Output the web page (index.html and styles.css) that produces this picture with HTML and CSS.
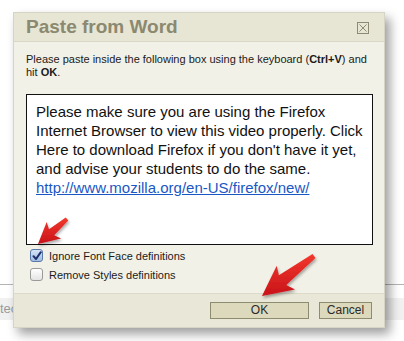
FILE: index.html
```html
<!DOCTYPE html>
<html>
<head>
<meta charset="utf-8">
<link rel="stylesheet" href="styles.css">
</head>
<body>
<div class="page">
  <div class="rule"></div>
  <div class="band"><span class="band-text">tec</span></div>
</div>

<div class="dialog">
  <div class="titlebar">
    <span class="title">Paste from Word</span>
    <span class="close">
      <svg width="12" height="12" viewBox="0 0 12 12"><rect x="0.5" y="0.5" width="11" height="11" fill="none" stroke="#8c8a74"/><path d="M2.5 2.5 L9.5 9.5 M9.5 2.5 L2.5 9.5" stroke="#8c8a74" stroke-width="1"/></svg>
    </span>
  </div>
  <div class="content">
    <p class="intro">Please paste inside the following box using the keyboard (<b>Ctrl+V</b>) and<br>hit <b>OK</b>.</p>
    <div class="paste">
      <p>Please make sure you are using the Firefox Internet Browser to view this video properly. Click Here to download Firefox if you don't have it yet, and advise your students to do the same. <a href="#">http://www.mozilla.org/en-US/firefox/new/</a></p>
    </div>
    <div class="options">
      <label class="opt"><span class="cb checked"><svg width="10" height="10" viewBox="0 0 10 10"><path d="M1.5 5.2 L4 8 L8.8 1.2" fill="none" stroke="#1d2f6b" stroke-width="2" stroke-linecap="round" stroke-linejoin="round"/></svg></span>Ignore Font Face definitions</label>
      <label class="opt"><span class="cb"></span>Remove Styles definitions</label>
    </div>
  </div>
  <div class="footer">
    <span class="btn ok">OK</span>
    <span class="btn cancel">Cancel</span>
  </div>
</div>

<svg class="arrows" width="404" height="341" viewBox="0 0 404 341">
  <defs>
    <filter id="sh" x="-30%" y="-30%" width="160%" height="160%">
      <feDropShadow dx="1" dy="2" stdDeviation="1.5" flood-color="#000" flood-opacity="0.35"/>
    </filter>
    <linearGradient id="rg" x1="0" y1="0" x2="0" y2="1">
      <stop offset="0" stop-color="#f2382c"/>
      <stop offset="1" stop-color="#c9131a"/>
    </linearGradient>
  </defs>
  <polygon filter="url(#sh)" fill="url(#rg)" points="38,244 61.1,238.5 54.2,235.2 68.3,220.5 65.7,217.5 49,229.2 46.7,221.9"/>
  <polygon filter="url(#sh)" fill="url(#rg)" points="262,296 295,289.6 286.3,284.9 315.5,258 312.5,254 278.9,275.3 276.7,265.8"/>
</svg>
</body>
</html>
```

FILE: styles.css
```css
html, body {
  margin: 0;
  padding: 0;
  background: #ffffff;
}
body {
  width: 404px;
  height: 341px;
  overflow: hidden;
  position: relative;
  font-family: "Liberation Sans", Arial, sans-serif;
}
.page {
  padding-top: 284px;
}
.rule {
  height: 1px;
  background: #b4b4b4;
}
.band {
  margin-top: 13px;
  height: 22px;
  background: #f1f1f1;
  font-size: 13px;
  line-height: 22px;
  color: #9a9a9a;
}
.band-text {
  margin-left: 0;
}
.dialog {
  position: absolute;
  left: 13px;
  top: 12px;
  width: 370px;
  height: 314px;
  border: 1px solid #d6d4c2;
  background: #f2f1e8;
  box-shadow: 5px 6px 10px rgba(0, 0, 0, 0.38);
  display: flex;
  flex-direction: column;
}
.titlebar {
  height: 28px;
  background: #e7e5d4;
  border-bottom: 1px solid #d9d7c5;
  display: flex;
  align-items: center;
  justify-content: space-between;
  padding: 0 15px 0 12px;
}
.title {
  font-size: 19px;
  font-weight: bold;
  color: #8b896f;
}
.close {
  display: flex;
  margin-top: 2px;
}
.content {
  flex: 1;
  padding: 11px 8px 0 12px;
}
.intro {
  margin: 0;
  font-size: 11px;
  line-height: 13px;
  color: #1a1a1a;
  white-space: nowrap;
}
.paste {
  box-sizing: border-box;
  margin: 15px 3px 0 0;
  height: 151px;
  border: 1px solid #111;
  background: #fff;
  padding: 7px 8px 0 9px;
}
.paste p {
  margin: 0;
  font-size: 15px;
  line-height: 19px;
  color: #111;
}
.paste a {
  color: #1a57c4;
  text-decoration: underline;
}
.options {
  margin-top: 1px;
  padding-left: 4px;
}
.opt {
  display: flex;
  align-items: center;
  height: 19px;
  font-size: 11px;
  color: #1a1a1a;
}
.cb {
  width: 11px;
  height: 11px;
  border: 1px solid #9a9a9a;
  border-radius: 3px;
  background: linear-gradient(#ffffff, #e4e4e4);
  margin-right: 6px;
  display: flex;
  align-items: center;
  justify-content: center;
}
.cb.checked {
  border-color: #5a78a8;
  background: linear-gradient(#d4e4f7, #9fbde3);
}
.footer {
  height: 33px;
  border-top: 1px solid #dcdac8;
  background: #e9e7d8;
  display: flex;
  align-items: center;
  justify-content: flex-end;
  gap: 10px;
  padding: 0 12px 0 0;
}
.btn {
  height: 15px;
  border: 1px solid #8e8c6e;
  background: #dcd9bc;
  font-size: 12px;
  line-height: 15px;
  color: #2a2a2a;
  text-align: center;
}
.ok {
  width: 97px;
}
.cancel {
  width: 51px;
}
.arrows {
  position: absolute;
  left: 0;
  top: 0;
}
```
